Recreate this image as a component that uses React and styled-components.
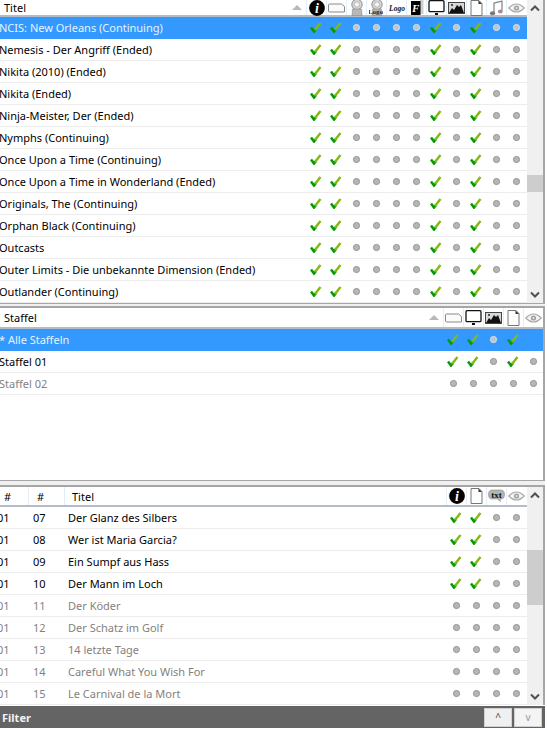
import React from 'react'
import styled, { createGlobalStyle } from 'styled-components'

const GlobalStyle = createGlobalStyle`
  html, body {
    margin: 0;
    padding: 0;
    background: #fff;
    overflow: hidden;
  }
  body {
    font-family: "Noto Sans", Tahoma, sans-serif;
    font-size: 11px;
    font-weight: 400;
    color: #000;
  }
`

const Window = styled.div`
  width: 545px;
  height: 729px;
  display: flex;
  flex-direction: column;
`

const Panel = styled.section`
  height: ${props => props.height}px;
  display: flex;
  overflow: hidden;
  border-right: 2px solid #a6a6a6;
  flex: none;
`

const Main = styled.div`
  flex: 1;
  min-width: 0;
`

const Splitter = styled.div`
  height: ${props => props.height}px;
  background: #f0f0f0;
  border-top: 1px solid #a6a6a6;
  border-bottom: 2px solid #a6a6a6;
  box-sizing: border-box;
  flex: none;
`

const Header = styled.div`
  height: ${props => props.height}px;
  box-sizing: border-box;
  display: flex;
  align-items: center;
  background: #fff;
  border-bottom: 2px solid #b4bcc8;
  padding-right: ${props => props.inset}px;
`

const HeaderTitle = styled.div`
  flex: 1;
  padding-left: ${props => props.left}px;
  padding-top: 1px;
  line-height: 14px;
`

const SortArrow = styled.span`
  width: 0;
  height: 0;
  border-left: 5px solid transparent;
  border-right: 5px solid transparent;
  border-bottom: 5px solid #b8b8b8;
  margin-right: 4px;
`

const HeaderCell = styled.div`
  width: 20px;
  height: 100%;
  flex: none;
  box-sizing: border-box;
  display: flex;
  align-items: center;
  justify-content: center;
  border-left: 1px solid #e6eef8;
`

const NumHeader = styled.div`
  width: ${props => props.width}px;
  height: 100%;
  flex: none;
  box-sizing: border-box;
  display: flex;
  align-items: center;
  padding: 1px 0 0 ${props => props.left}px;
  border-right: 1px solid #e4ecf6;
`

const Row = styled.div`
  height: 22px;
  box-sizing: border-box;
  display: flex;
  align-items: center;
  padding-right: ${props => props.inset}px;
  border-bottom: 1px solid ${props => (props.selected ? '#3399ff' : '#ececec')};
  background: ${props => (props.selected ? '#3399ff' : '#fff')};
  color: ${props => {
    if (props.selected) return '#e8f2ff'
    return props.dim ? '#857f80' : '#000'
  }};
`

const Title = styled.div`
  flex: 1;
  min-width: 0;
  white-space: nowrap;
  margin-left: ${props => props.left}px;
  line-height: 14px;
`

const NumCell = styled.div`
  width: ${props => props.width}px;
  flex: none;
  white-space: nowrap;
  margin-left: ${props => props.left}px;
`

const Cell = styled.div`
  width: 20px;
  height: 100%;
  flex: none;
  display: flex;
  align-items: center;
  justify-content: center;
`

const Track = styled.div`
  width: 16px;
  flex: none;
  display: flex;
  flex-direction: column;
  background: #f0f0f0;
`

const TrackButton = styled.div`
  height: 17px;
  flex: none;
  display: flex;
  align-items: center;
  justify-content: center;
`

const TrackSpace = styled.div`
  flex: 1;
  padding-top: ${props => props.offset}px;
`

const Thumb = styled.div`
  height: ${props => props.size}px;
  background: #cdcdcd;
`

const FilterBar = styled.div`
  height: 22px;
  margin-top: 1px;
  flex: none;
  display: flex;
  align-items: center;
  background: #646464;
  padding-right: 3px;
  gap: 2px;
`

const FilterLabel = styled.div`
  flex: 1;
  padding-left: 2px;
  color: #f2f2f2;
  font-weight: 700;
`

const FilterButton = styled.button`
  width: 28px;
  height: 19px;
  padding: 0;
  border: 1px solid #d0d0d0;
  background: ${props => (props.disabled ? '#f4f4f4' : '#f0f0f0')};
  color: ${props => (props.disabled ? '#8f98ad' : '#444')};
  font-family: inherit;
  font-size: 10px;
  line-height: 15px;
`

const Check = () => (
  <svg width="12" height="11" viewBox="0 0 12 11">
    <path d="M1 5.5 L4 9.5 L6 7" fill="none" stroke="#089808" strokeWidth="2.6" />
    <path d="M5 8 L10.5 1" fill="none" stroke="#86b814" strokeWidth="2.4" />
  </svg>
)

const Dot = ({ selected }) => (
  <svg width="9" height="9" viewBox="0 0 9 9">
    <circle cx="4.5" cy="4.5" r="3.1" fill={selected ? '#c2c4cc' : '#b6b6b6'} stroke={selected ? '#dfe4ee' : '#8f8f8f'} strokeWidth=".9" />
  </svg>
)

const InfoIcon = () => (
  <svg width="18" height="16" viewBox="0 0 18 16">
    <circle cx="9" cy="8" r="7.9" fill="#000" />
    <text x="9" y="12.5" textAnchor="middle" fill="#fff" fontFamily="Liberation Serif" fontStyle="italic" fontWeight="700" fontSize="14">i</text>
  </svg>
)

const BannerIcon = () => (
  <svg width="17" height="10" viewBox="0 0 17 10">
    <path d="M1.5 1 H13.5 L16.5 3.5 V9 H1.5 Q.5 9 .5 8 V2 Q.5 1 1.5 1 Z" fill="#fbfbfb" stroke="#888" />
  </svg>
)

const ClearArt = ({ withLogo }) => (
  <svg width="16" height="17" viewBox="0 0 16 17">
    <circle cx="8" cy="5.5" r="5.2" fill="#d8d8d8" stroke="#777" strokeWidth=".8" />
    <circle cx="8" cy="5.5" r="2.7" fill="#f4f4f4" stroke="#999" strokeWidth=".6" />
    <path d="M3.5 10 H12.5 L13 16.5 H3 Z" fill="#b8b8b8" stroke="#8a8a8a" strokeWidth=".6" />
    {withLogo && (
      <text x="6.5" y="15" textAnchor="middle" fill="#222" fontFamily="Liberation Serif" fontWeight="700" fontSize="7">Logo</text>
    )}
  </svg>
)

const LogoIcon = () => (
  <svg width="18" height="12" viewBox="0 0 18 12">
    <text x="9" y="9" textAnchor="middle" fill="#111" fontFamily="Liberation Serif" fontStyle="italic" fontWeight="700" fontSize="7.5">Logo</text>
  </svg>
)

const FanartIcon = () => (
  <svg width="14" height="16" viewBox="0 0 14 16">
    <rect x="10" y="0" width="3.5" height="14" fill="#cfcfcf" />
    <rect x="1" y="1" width="9.5" height="14" fill="#000" />
    <text x="5.6" y="12" textAnchor="middle" fill="#fff" fontFamily="Liberation Serif" fontStyle="italic" fontWeight="700" fontSize="11">F</text>
  </svg>
)

const MonitorIcon = () => (
  <svg width="17" height="16" viewBox="0 0 17 16">
    <rect x="1" y=".7" width="15" height="11" rx="1" fill="#fff" stroke="#111" strokeWidth="1.3" />
    <rect x="7" y="13" width="3" height="2" fill="#111" />
  </svg>
)

const ImageIcon = () => (
  <svg width="17" height="12" viewBox="0 0 17 12">
    <rect x=".5" y=".5" width="16" height="11" fill="#d8d8d8" stroke="#444" />
    <path d="M1 11 L4 6 L6 8 L9 3 L11 5 L13 3 L16 11 Z" fill="#111" />
    <circle cx="4" cy="3" r="1" fill="#222" />
  </svg>
)

const PageIcon = () => (
  <svg width="13" height="16" viewBox="0 0 13 16">
    <path d="M1 .5 H9 L12 3.5 V15.5 H1 Z" fill="#fdfdfd" stroke="#777" />
    <path d="M8.5 .5 V4 H12 Z" fill="#333" />
  </svg>
)

const MusicIcon = () => (
  <svg width="15" height="16" viewBox="0 0 15 16">
    <path d="M5 13 V3 L13 1 V11" fill="none" stroke="#8c8c8c" strokeWidth="1.3" />
    <ellipse cx="3.5" cy="13.3" rx="2.6" ry="2" fill="#777" />
    <ellipse cx="11.3" cy="11.5" rx="2.4" ry="1.9" fill="#a78aa0" />
  </svg>
)

const EyeIcon = () => (
  <svg width="17" height="12" viewBox="0 0 17 12">
    <path d="M.8 6 Q8.5 -2 16.2 6 Q8.5 14 .8 6 Z" fill="#f4f4f4" stroke="#a8a8a8" strokeWidth="1.2" />
    <circle cx="8.5" cy="6" r="2.6" fill="#a0a0a0" />
    <circle cx="8.5" cy="6" r="1" fill="#eee" />
  </svg>
)

const TextIcon = () => (
  <svg width="17" height="14" viewBox="0 0 17 14">
    <path d="M4 1 H13 Q16.5 1 16.5 5.5 Q16.5 10 13 10 H12 L12.5 12.5 L9.5 10 H4 Q.5 10 .5 5.5 Q.5 1 4 1 Z" fill="#b4b4b4" stroke="#8c8c8c" strokeWidth=".6" />
    <text x="8.5" y="8.5" textAnchor="middle" fill="#111" fontFamily="Liberation Serif" fontWeight="700" fontSize="9">txt</text>
  </svg>
)

const UpChevron = () => (
  <svg width="10" height="7" viewBox="0 0 10 7">
    <path d="M1 5.5 L5 1.5 L9 5.5" fill="none" stroke="#505050" strokeWidth="2" />
  </svg>
)

const DownChevron = () => (
  <svg width="10" height="7" viewBox="0 0 10 7">
    <path d="M1 1.5 L5 5.5 L9 1.5" fill="none" stroke="#505050" strokeWidth="2" />
  </svg>
)

const ScrollBar = ({ offset, size }) => (
  <Track>
    <TrackButton><UpChevron /></TrackButton>
    <TrackSpace offset={offset}><Thumb size={size} /></TrackSpace>
    <TrackButton><DownChevron /></TrackButton>
  </Track>
)

const marks = (row, selected) => row.split('').map((mark, i) => (
  <Cell key={i}>
    {mark === 'x' && <Check />}
    {mark === 'o' && <Dot selected={selected} />}
  </Cell>
))

const showIcons = [
  <InfoIcon />, <BannerIcon />, <ClearArt />, <ClearArt withLogo />, <LogoIcon />, <FanartIcon />,
  <MonitorIcon />, <ImageIcon />, <PageIcon />, <MusicIcon />, <EyeIcon />
]
const seasonIcons = [<BannerIcon />, <MonitorIcon />, <ImageIcon />, <PageIcon />, <EyeIcon />]
const episodeIcons = [<InfoIcon />, <PageIcon />, <TextIcon />, <EyeIcon />]

const shows = [
  'NCIS: New Orleans (Continuing)',
  'Nemesis - Der Angriff (Ended)',
  'Nikita (2010) (Ended)',
  'Nikita (Ended)',
  'Ninja-Meister, Der (Ended)',
  'Nymphs (Continuing)',
  'Once Upon a Time (Continuing)',
  'Once Upon a Time in Wonderland (Ended)',
  'Originals, The (Continuing)',
  'Orphan Black (Continuing)',
  'Outcasts',
  'Outer Limits - Die unbekannte Dimension (Ended)',
  'Outlander (Continuing)'
]

const seasons = [
  { title: '* Alle Staffeln', marks: 'xxox ', selected: true },
  { title: 'Staffel 01', marks: 'xxoxo' },
  { title: 'Staffel 02', marks: 'ooooo', dim: true }
]

const episodes = [
  ['01', '07', 'Der Glanz des Silbers', 'xxoo'],
  ['01', '08', 'Wer ist Maria Garcia?', 'xxoo'],
  ['01', '09', 'Ein Sumpf aus Hass', 'xxoo'],
  ['01', '10', 'Der Mann im Loch', 'xxoo'],
  ['01', '11', 'Der Köder', 'oooo'],
  ['01', '12', 'Der Schatz im Golf', 'oooo'],
  ['01', '13', '14 letzte Tage', 'oooo'],
  ['01', '14', 'Careful What You Wish For', 'oooo'],
  ['01', '15', 'Le Carnival de la Mort', 'oooo']
]

const headerCells = (icons) => icons.map((icon, i) => <HeaderCell key={i}>{icon}</HeaderCell>)

export default function App () {
  return (
    <Window>
      <GlobalStyle />
      <Panel height={303}>
        <Main>
          <Header height={17} inset={1}>
            <HeaderTitle left={4}>Titel</HeaderTitle>
            <SortArrow />
            {headerCells(showIcons)}
          </Header>
          {shows.map((title, i) => (
            <Row key={title} inset={1} selected={i === 0}>
              <Title left={-1}>{title}</Title>
              {marks('xxooooxoxoo', i === 0)}
            </Row>
          ))}
        </Main>
        <ScrollBar offset={158} size={17} />
      </Panel>
      <Splitter height={5} />
      <Panel height={172}>
        <Main>
          <Header height={21} inset={0}>
            <HeaderTitle left={4}>Staffel</HeaderTitle>
            <SortArrow />
            {headerCells(seasonIcons)}
          </Header>
          {seasons.map(season => (
            <Row key={season.title} inset={0} selected={season.selected} dim={season.dim}>
              <Title left={-1}>{season.title}</Title>
              {marks(season.marks, season.selected)}
            </Row>
          ))}
        </Main>
      </Panel>
      <Splitter height={7} />
      <Panel height={218}>
        <Main>
          <Header height={20} inset={1}>
            <NumHeader width={29} left={4}>#</NumHeader>
            <NumHeader width={36} left={8}>#</NumHeader>
            <HeaderTitle left={7}>Titel</HeaderTitle>
            {headerCells(episodeIcons)}
          </Header>
          {episodes.map(([season, number, title, state]) => (
            <Row key={number} inset={1} dim={state === 'oooo'}>
              <NumCell width={33} left={-3}>{season}</NumCell>
              <NumCell width={35} left={3}>{number}</NumCell>
              <Title left={0}>{title}</Title>
              {marks(state)}
            </Row>
          ))}
        </Main>
        <ScrollBar offset={46} size={55} />
      </Panel>
      <FilterBar>
        <FilterLabel>Filter</FilterLabel>
        <FilterButton>^</FilterButton>
        <FilterButton disabled>v</FilterButton>
      </FilterBar>
    </Window>
  )
}
